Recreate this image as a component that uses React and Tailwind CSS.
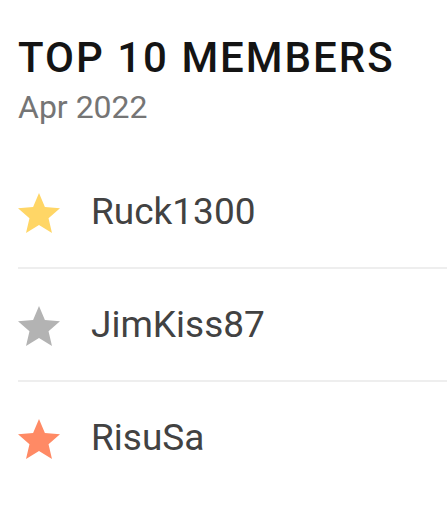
const members = [
  { name: "Ruck1300", color: "#ffd666" },
  { name: "JimKiss87", color: "#b3b3b3" },
  { name: "RisuSa", color: "#ff8a65" },
];

function Star({ color }) {
  return (
    <svg width="42" height="40" viewBox="2 2 20 19" className="shrink-0 mt-[2px]">
      <path
        d="M12 17.27L18.18 21l-1.64-7.03L22 9.24l-7.19-.61L12 2 9.19 8.63 2 9.24l5.46 4.73L5.82 21z"
        fill={color}
      />
    </svg>
  );
}

export default function App() {
  return (
    <div
      className="w-[447px] h-[505px] bg-white pl-[18px] pt-[33px] overflow-hidden"
      style={{ fontFamily: "Roboto, 'Noto Sans', sans-serif" }}
    >
      {/* Header */}
      <h1 className="text-[42px] leading-[50px] font-medium tracking-[2px] text-[#141414]">
        TOP 10 MEMBERS
      </h1>
      <p className="text-[32px] leading-[36px] text-[#757575] mt-[6px]">Apr 2022</p>

      {/* List */}
      <ul className="mt-[31px]">
        {members.map((m, i) => (
          <li key={m.name}>
            <div className="h-[111px] flex items-center">
              <Star color={m.color} />
              <span className="ml-[31px] text-[37px] text-[#424242]">{m.name}</span>
            </div>
            {i < members.length - 1 && <div className="h-[2px] bg-[#eeeeee]" />}
          </li>
        ))}
      </ul>
    </div>
  );
}
